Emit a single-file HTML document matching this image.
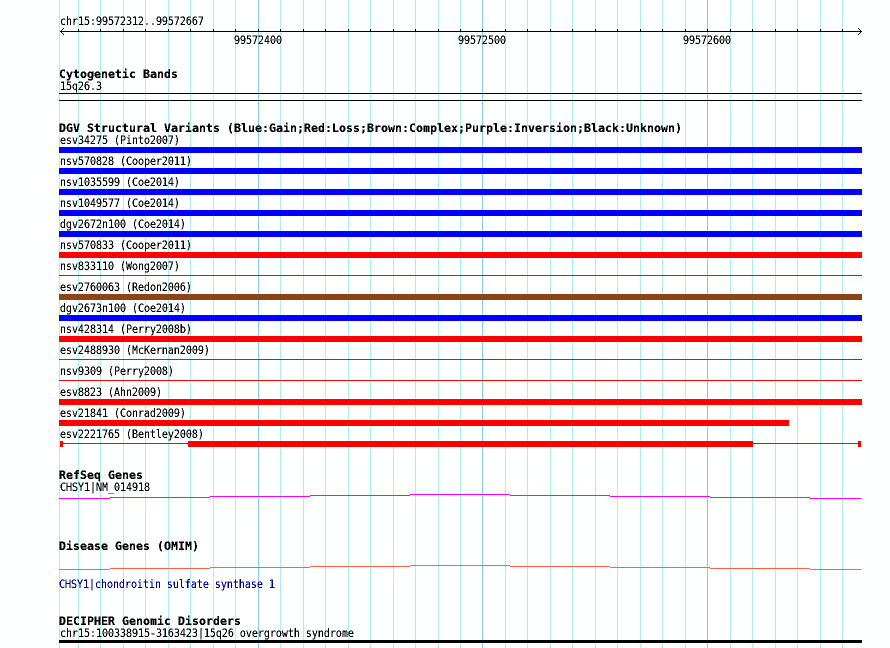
<!DOCTYPE html>
<html><head><meta charset="utf-8"><style>
html,body{margin:0;padding:0;background:#fff;width:890px;height:648px;overflow:hidden}
svg{display:block}
text{font-family:"DejaVu Sans Mono","Liberation Mono",monospace;white-space:pre}
.s{font-size:10px;letter-spacing:-.02px}
.b{font-size:11.6px;font-weight:bold;letter-spacing:.02px}
</style></head><body>
<svg width="890" height="648" viewBox="0 0 890 648" xmlns="http://www.w3.org/2000/svg">
<defs><filter id="px" filterUnits="userSpaceOnUse" x="0" y="0" width="890" height="648" color-interpolation-filters="sRGB"><feComponentTransfer><feFuncA type="discrete" tableValues="0 1 1"/></feComponentTransfer></filter></defs>
<rect width="890" height="648" fill="#feffff"/>
<g shape-rendering="crispEdges">
<g fill="#aeeeee">
<rect x="59" y="0" width="1" height="648"/><rect x="78" y="0" width="1" height="648"/><rect x="100" y="0" width="1" height="648"/><rect x="123" y="0" width="1" height="648"/><rect x="145" y="0" width="1" height="648"/><rect x="168" y="0" width="1" height="648"/><rect x="190" y="0" width="1" height="648"/><rect x="213" y="0" width="1" height="648"/><rect x="235" y="0" width="1" height="648"/><rect x="280" y="0" width="1" height="648"/><rect x="303" y="0" width="1" height="648"/><rect x="325" y="0" width="1" height="648"/><rect x="348" y="0" width="1" height="648"/><rect x="370" y="0" width="1" height="648"/><rect x="393" y="0" width="1" height="648"/><rect x="415" y="0" width="1" height="648"/><rect x="438" y="0" width="1" height="648"/><rect x="460" y="0" width="1" height="648"/><rect x="505" y="0" width="1" height="648"/><rect x="527" y="0" width="1" height="648"/><rect x="550" y="0" width="1" height="648"/><rect x="572" y="0" width="1" height="648"/><rect x="595" y="0" width="1" height="648"/><rect x="617" y="0" width="1" height="648"/><rect x="640" y="0" width="1" height="648"/><rect x="662" y="0" width="1" height="648"/><rect x="685" y="0" width="1" height="648"/><rect x="730" y="0" width="1" height="648"/><rect x="752" y="0" width="1" height="648"/><rect x="775" y="0" width="1" height="648"/><rect x="797" y="0" width="1" height="648"/><rect x="820" y="0" width="1" height="648"/><rect x="842" y="0" width="1" height="648"/>
</g>
<g fill="#87ceeb"><rect x="258" y="0" width="1" height="648"/><rect x="482" y="0" width="1" height="648"/><rect x="707" y="0" width="1" height="648"/></g>
<g fill="#000">
<rect x="60" y="31" width="802" height="1"/>
<rect x="78" y="29" width="1" height="3"/><rect x="100" y="29" width="1" height="3"/><rect x="123" y="29" width="1" height="3"/><rect x="145" y="29" width="1" height="3"/><rect x="168" y="29" width="1" height="3"/><rect x="190" y="29" width="1" height="3"/><rect x="213" y="29" width="1" height="3"/><rect x="235" y="29" width="1" height="3"/><rect x="258" y="29" width="1" height="3"/><rect x="280" y="29" width="1" height="3"/><rect x="303" y="29" width="1" height="3"/><rect x="325" y="29" width="1" height="3"/><rect x="348" y="29" width="1" height="3"/><rect x="370" y="29" width="1" height="3"/><rect x="393" y="29" width="1" height="3"/><rect x="415" y="29" width="1" height="3"/><rect x="438" y="29" width="1" height="3"/><rect x="460" y="29" width="1" height="3"/><rect x="482" y="29" width="1" height="3"/><rect x="505" y="29" width="1" height="3"/><rect x="527" y="29" width="1" height="3"/><rect x="550" y="29" width="1" height="3"/><rect x="572" y="29" width="1" height="3"/><rect x="595" y="29" width="1" height="3"/><rect x="617" y="29" width="1" height="3"/><rect x="640" y="29" width="1" height="3"/><rect x="662" y="29" width="1" height="3"/><rect x="685" y="29" width="1" height="3"/><rect x="707" y="29" width="1" height="3"/><rect x="730" y="29" width="1" height="3"/><rect x="752" y="29" width="1" height="3"/><rect x="775" y="29" width="1" height="3"/><rect x="797" y="29" width="1" height="3"/><rect x="820" y="29" width="1" height="3"/><rect x="842" y="29" width="1" height="3"/>
<rect x="61" y="30" width="1" height="3"/><rect x="62" y="29" width="1" height="1"/><rect x="62" y="33" width="1" height="1"/><rect x="63" y="28" width="1" height="1"/><rect x="63" y="34" width="1" height="1"/>
<rect x="860" y="30" width="1" height="3"/><rect x="859" y="29" width="1" height="1"/><rect x="859" y="33" width="1" height="1"/><rect x="858" y="28" width="1" height="1"/><rect x="858" y="34" width="1" height="1"/>
<rect x="59" y="93" width="803" height="1"/><rect x="59" y="100" width="803" height="1"/>
<rect x="59" y="640" width="803" height="3"/>
</g>
<g fill="#0000ff"><rect x="59" y="147" width="803" height="6"/><rect x="59" y="168" width="803" height="6"/><rect x="59" y="189" width="803" height="6"/><rect x="59" y="210" width="803" height="6"/><rect x="59" y="231" width="803" height="6"/><rect x="59" y="315" width="803" height="6"/></g>
<rect x="59" y="294" width="803" height="6" fill="#8b4513"/>
<g fill="#ff0000">
<rect x="59" y="252" width="803" height="6"/><rect x="59" y="275" width="803" height="1"/><rect x="59" y="336" width="803" height="6"/><rect x="59" y="359" width="803" height="1"/><rect x="59" y="380" width="803" height="1"/><rect x="59" y="399" width="803" height="6"/><rect x="59" y="420" width="730" height="6"/>
<rect x="60" y="441" width="3" height="6"/><rect x="63" y="443" width="125" height="1"/><rect x="188" y="441" width="565" height="6"/><rect x="753" y="443" width="105" height="1"/><rect x="858" y="441" width="3" height="6"/>
</g>
<g fill="#ff00ff"><rect x="59" y="498" width="51" height="1"/><rect x="110" y="497" width="100" height="1"/><rect x="210" y="496" width="100" height="1"/><rect x="310" y="495" width="100" height="1"/><rect x="410" y="494" width="100" height="1"/><rect x="510" y="495" width="100" height="1"/><rect x="610" y="496" width="100" height="1"/><rect x="710" y="497" width="100" height="1"/><rect x="810" y="498" width="51" height="1"/></g>
<g fill="#ff6347"><rect x="59" y="569" width="51" height="1"/><rect x="110" y="568" width="100" height="1"/><rect x="210" y="567" width="100" height="1"/><rect x="310" y="566" width="100" height="1"/><rect x="410" y="565" width="100" height="1"/><rect x="510" y="566" width="100" height="1"/><rect x="610" y="567" width="100" height="1"/><rect x="710" y="568" width="100" height="1"/><rect x="810" y="569" width="51" height="1"/></g>
</g>
<g class="s" fill="#000" filter="url(#px)">
<text transform="translate(60 25) scale(1 1.12)">chr15:99572312..99572667</text>
<text transform="translate(234 44) scale(1 1.12)">99572400</text><text transform="translate(458 44) scale(1 1.12)">99572500</text><text transform="translate(683 44) scale(1 1.12)">99572600</text>
<text transform="translate(60 90) scale(1 1.12)">15q26.3</text>
<text transform="translate(60 144) scale(1 1.12)">esv34275 (Pinto2007)</text>
<text transform="translate(60 165) scale(1 1.12)">nsv570828 (Cooper2011)</text>
<text transform="translate(60 186) scale(1 1.12)">nsv1035599 (Coe2014)</text>
<text transform="translate(60 207) scale(1 1.12)">nsv1049577 (Coe2014)</text>
<text transform="translate(60 228) scale(1 1.12)">dgv2672n100 (Coe2014)</text>
<text transform="translate(60 249) scale(1 1.12)">nsv570833 (Cooper2011)</text>
<text transform="translate(60 270) scale(1 1.12)">nsv833110 (Wong2007)</text>
<text transform="translate(60 291) scale(1 1.12)">esv2760063 (Redon2006)</text>
<text transform="translate(60 312) scale(1 1.12)">dgv2673n100 (Coe2014)</text>
<text transform="translate(60 333) scale(1 1.12)">nsv428314 (Perry2008b)</text>
<text transform="translate(60 354) scale(1 1.12)">esv2488930 (McKernan2009)</text>
<text transform="translate(60 375) scale(1 1.12)">nsv9309 (Perry2008)</text>
<text transform="translate(60 396) scale(1 1.12)">esv8823 (Ahn2009)</text>
<text transform="translate(60 417) scale(1 1.12)">esv21841 (Conrad2009)</text>
<text transform="translate(60 438) scale(1 1.12)">esv2221765 (Bentley2008)</text>
<text transform="translate(60 491) scale(1 1.12)">CHSY1|NM_014918</text>
<text transform="translate(59 588) scale(1 1.12)" fill="#00008b">CHSY1|chondroitin sulfate synthase 1</text>
<text transform="translate(60 637) scale(1 1.12)">chr15:100338915-3163423|15q26 overgrowth syndrome</text>
</g>
<g class="b" fill="#000" filter="url(#px)">
<text x="59" y="78">Cytogenetic Bands</text>
<text x="59" y="132">DGV Structural Variants (Blue:Gain;Red:Loss;Brown:Complex;Purple:Inversion;Black:Unknown)</text>
<text x="59" y="479">RefSeq Genes</text>
<text x="59" y="550">Disease Genes (OMIM)</text>
<text x="59" y="625">DECIPHER Genomic Disorders</text>
</g>
</svg>
</body></html>
